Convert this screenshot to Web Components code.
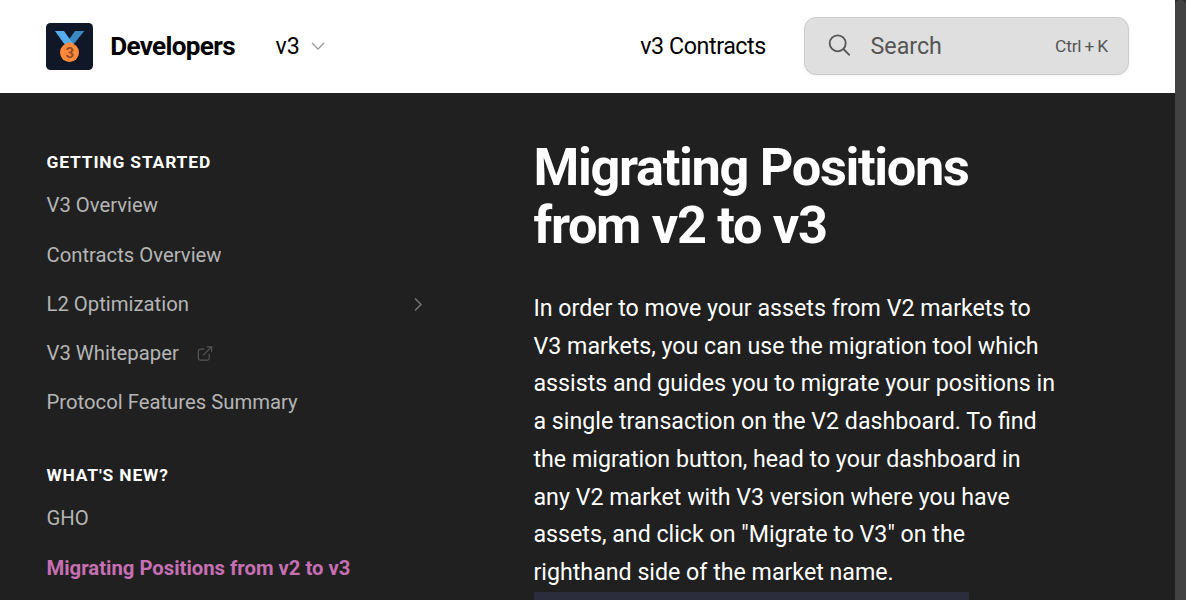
<!DOCTYPE html>
<html lang="en">
<head>
<meta charset="utf-8">
<title>Migrating Positions from v2 to v3</title>
<style>
html,body{margin:0;height:100%;overflow:hidden;background:#202020}
body{font-family:Roboto,"Liberation Sans",sans-serif}
</style>
</head>
<body>
<docs-page>
  <docs-header slot="header"></docs-header>
  <nav-group slot="nav" label="Getting Started">
    <nav-item>V3 Overview</nav-item>
    <nav-item>Contracts Overview</nav-item>
    <nav-item kind="parent">L2 Optimization</nav-item>
    <nav-item kind="external">V3 Whitepaper</nav-item>
    <nav-item>Protocol Features Summary</nav-item>
  </nav-group>
  <nav-group slot="nav" label="What's New?">
    <nav-item>GHO</nav-item>
    <nav-item active>Migrating Positions from v2 to v3</nav-item>
  </nav-group>
  <docs-article>
    <span slot="title">Migrating Positions from v2 to v3</span>
    In order to move your assets from V2 markets to V3 markets, you can use the migration tool which assists and guides you to migrate your positions in a single transaction on the V2 dashboard. To find the migration button, head to your dashboard in any V2 market with V3 version where you have assets, and click on "Migrate to V3" on the righthand side of the market name.
  </docs-article>
</docs-page>
<script>
const define = (name, html) => customElements.define(name, class extends HTMLElement {
  constructor() {
    super();
    this.attachShadow({mode: "open"}).innerHTML = html;
  }
  connectedCallback() {
    const label = this.shadowRoot.querySelector("[data-label]");
    if (label) label.textContent = this.getAttribute("label");
  }
});

define("docs-page", `<style>
:host{display:grid;grid-template-columns:1fr 11px;height:600px;overflow:hidden}
.view{display:grid;grid-template-rows:93px 1fr;min-width:0;height:600px;overflow:hidden}
.body{display:grid;grid-template-columns:378px 523px;column-gap:109px;padding:0 0 0 46.5px;min-height:0;overflow:hidden;background:#202020}
nav{padding-top:58px}
.bar{background:#2a2a2a;overflow:hidden}
.thumb{height:620px;border-radius:5px;background:#424242}
</style>
<div class="view"><slot name="header"></slot>
<div class="body"><nav><slot name="nav"></slot></nav><main><slot></slot></main></div></div>
<div class="bar"><div class="thumb"></div></div>`);

define("docs-header", `<style>
:host{display:flex;align-items:center;box-sizing:border-box;height:93px;padding:0 46px 1px;background:#fff;color:#000;font-size:23.25px;line-height:32px}
medal-logo{margin:1px 17.2px 0 0}
.name{font-size:26.1px;font-weight:700;letter-spacing:-.67px}
.version{display:flex;align-items:center;margin-left:40.5px;gap:10px}
.link{margin-left:auto;margin-right:38.2px;letter-spacing:-.44px}
</style>
<medal-logo></medal-logo><span class="name">Developers</span>
<span class="version"><span>v3</span><svg width="16" height="16" viewBox="0 0 16 16" fill="none" stroke="#999" stroke-width="1.3"><path d="M2 5l6 6 6-6"/></svg></span>
<span class="link">v3 Contracts</span><search-box></search-box>`);

define("medal-logo", `<style>:host{display:block;width:47px;height:47px}svg{display:block}text{font:700 15px Roboto,sans-serif}</style>
<svg width="47" height="47" viewBox="0 0 47 47"><rect width="47" height="47" rx="4.5" fill="#101827"/>
<path d="M29 8h9.3L27 22h-8z" fill="#3b88c3"/><path d="M9 8h9l10 14h-9z" fill="#55acee"/>
<path d="M19.500 21q4-3.500 8 0v3h-8z" fill="#ff8a3b"/><circle cx="23.500" cy="29.500" r="9.500" fill="#ff8a3b"/>
<text x="23.7" y="35" text-anchor="middle" fill="#914a24">3</text></svg>`);

define("search-box", `<style>
:host{display:flex;align-items:center;box-sizing:border-box;width:325px;height:58px;padding:0 20px 0 22.5px;border:1.5px solid #cbcbcb;border-radius:12px;background:#dfdfdf;color:#555;box-shadow:0 1px 3px #0000000d}
svg{margin-right:19px}
.key{margin-left:auto;font-size:17.4px;letter-spacing:-.2px;word-spacing:-1px}
</style>
<svg width="24" height="24" viewBox="0 0 24 24" fill="none" stroke="#555" stroke-width="1.8"><circle cx="9.700" cy="9.300" r="8"/><path d="M15.400 15l6.300 6.300"/></svg>
<span>Search</span><span class="key">Ctrl + K</span>`);

define("nav-group", `<style>
:host{display:block;margin-bottom:36.8px}
.label{font-size:17.4px;line-height:22px;font-weight:700;letter-spacing:.85px;text-transform:uppercase;color:#fff;margin-bottom:8.25px}
</style><div class="label" data-label></div><slot></slot>`);

define("nav-item", `<style>
:host{display:flex;align-items:center;height:49.2px;box-sizing:border-box;color:#b5b5b5;font-size:20.3px;line-height:29px}
:host([active]){color:#c76fb3;font-weight:700}
svg{display:none;fill:none}
:host([kind=parent]) .chevron{display:block;margin-left:auto;stroke:#777}
:host([kind=external]) .external{display:block;margin-left:18px;stroke:#555}
</style><slot></slot>
<svg class="chevron" width="15" height="16" viewBox="0 0 15 16" stroke-width="1.4"><path d="M5 2.500l6 6-6 6"/></svg>
<svg class="external" width="16" height="16" viewBox="0 0 17 17" stroke-width="1.3"><path d="M8 4.500H3.500Q1.500 4.500 1.500 6.500v7.500q0 2 2 2H11q2 0 2-2V9.500M6.500 11L15 2.500M10.500 2.100h5v5"/></svg>`);

define("docs-article", `<style>
:host{display:block;padding-top:45px;color:#fff;font-size:23.2px;line-height:37.7px}
h1{margin:0 0 35.85px;font-size:52.3px;line-height:58.1px;font-weight:700;letter-spacing:-1.33px}
p{margin:0}
.media{width:435px;height:40px;background:#2b2d3c}
</style><h1><slot name="title"></slot></h1><p><slot></slot></p><div class="media"></div>`);
</script>
</body>
</html>
